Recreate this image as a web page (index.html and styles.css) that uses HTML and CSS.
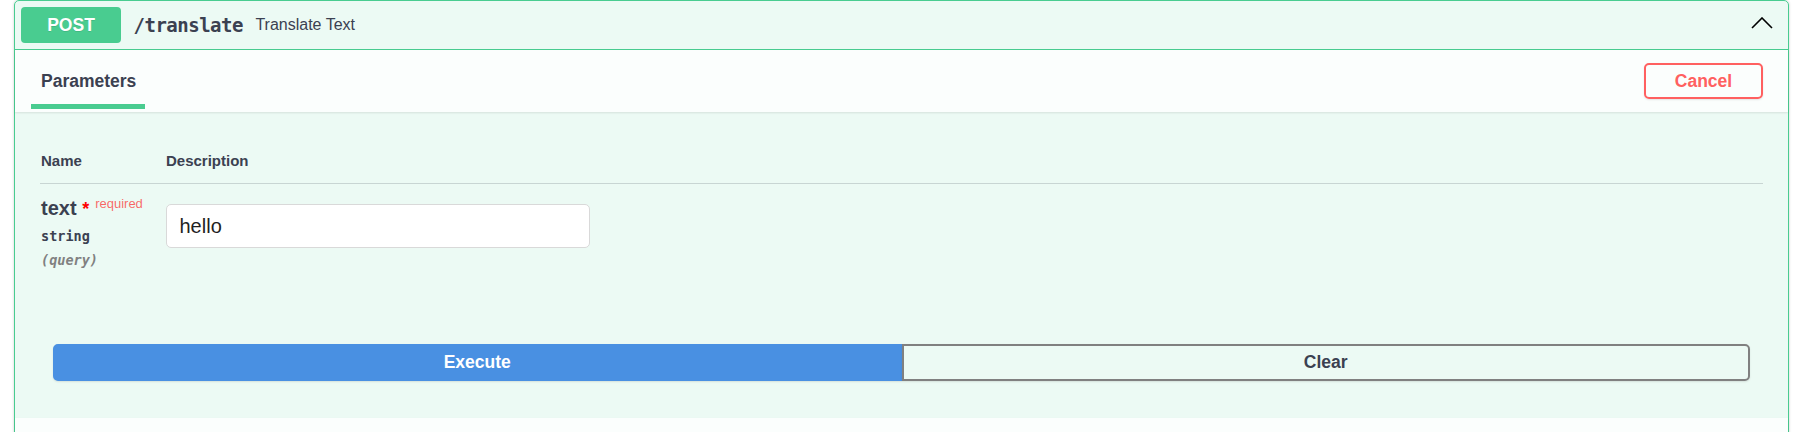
FILE: index.html
```html
<!DOCTYPE html>
<html lang="en">
<head>
<meta charset="utf-8">
<title>POST /translate</title>
<link rel="stylesheet" href="styles.css">
</head>
<body>
<div class="opblock">
  <div class="summary">
    <span class="method">POST</span>
    <span class="path">/translate</span>
    <span class="desc">Translate Text</span>
    <svg class="arrow" width="22" height="12" viewBox="0 0 22 12" aria-hidden="true"><polyline points="1,11 11,1 21,11" fill="none" stroke="#000" stroke-width="1.6"/></svg>
  </div>
  <div class="section-header">
    <div class="tab">
      <h4 class="tab-title">Parameters</h4>
      <span class="tab-bar"></span>
    </div>
    <button class="btn cancel">Cancel</button>
  </div>
  <div class="params">
    <div class="params-head">
      <div class="col-name">Name</div>
      <div class="col-desc">Description</div>
    </div>
    <div class="param-row">
      <div class="col-name">
        <div class="pname">text <span class="star">*</span><span class="req">required</span></div>
        <div class="ptype">string</div>
        <div class="pin">(query)</div>
      </div>
      <div class="col-desc">
        <input class="pinput" type="text" value="hello">
      </div>
    </div>
  </div>
  <div class="btn-group">
    <button class="btn execute">Execute</button>
    <button class="btn clear">Clear</button>
  </div>
  <div class="responses-header"></div>
</div>
</body>
</html>
```
FILE: styles.css
```css
html, body {
  margin: 0;
  padding: 0;
  overflow: hidden;
  background: #fff;
}
body {
  font-family: "Liberation Sans", Arial, sans-serif;
  color: #3b4151;
}
.opblock {
  margin: 0 7px 0 14px;
  border: 1px solid #49cc90;
  border-radius: 5px;
  background: rgba(73, 204, 144, 0.1);
  box-shadow: 0 0 3px rgba(0, 0, 0, 0.19);
}
.summary {
  display: flex;
  align-items: center;
  padding: 6px;
  border-bottom: 1px solid #49cc90;
}
.method {
  display: flex;
  align-items: center;
  justify-content: center;
  width: 100px;
  height: 36px;
  background: #49cc90;
  color: #fff;
  border-radius: 4px;
  font-weight: 700;
  font-size: 17.5px;
  text-shadow: 0 1px 0 rgba(0, 0, 0, 0.1);
}
.path {
  padding: 0 12.5px;
  font-family: "DejaVu Sans Mono", "Liberation Mono", monospace;
  font-weight: 700;
  font-size: 19px;
  letter-spacing: -0.5px;
  color: #3b4151;
}
.desc {
  flex: 1;
  font-size: 16px;
  color: #3b4151;
}
.arrow {
  margin: 0 9px 4px 0;
}
.section-header {
  display: flex;
  justify-content: space-between;
  align-items: stretch;
  height: 62px;
  padding: 0 25px;
  background: rgba(255, 255, 255, 0.8);
  box-shadow: 0 1px 2px rgba(0, 0, 0, 0.1);
}
.tab {
  display: flex;
  flex-direction: column;
  padding-top: 21px;
}
.tab-title {
  margin: 0 0 0 1px;
  font-size: 17.5px;
  line-height: 20px;
  font-weight: 700;
  color: #3b4151;
}
.tab-bar {
  display: block;
  height: 5px;
  margin: 13px -9px 0 -9px;
  background: #49cc90;
}
.btn {
  font-family: "Liberation Sans", Arial, sans-serif;
  font-weight: 700;
  font-size: 17.5px;
  background: transparent;
  border: 2px solid gray;
  border-radius: 5px;
  box-shadow: 0 1px 2px rgba(0, 0, 0, 0.1);
  color: #3b4151;
  cursor: pointer;
  padding: 0;
}
.cancel {
  align-self: center;
  width: 119px;
  height: 36px;
  border-color: #ff6060;
  color: #ff6060;
}
.params {
  padding: 25px 25px 37px;
}
.params-head {
  display: grid;
  grid-template-columns: 126px 1fr;
  padding: 15px 0 13px;
  border-bottom: 1px solid rgba(59, 65, 81, 0.2);
  font-size: 15px;
  line-height: 18px;
  font-weight: 700;
}
.params-head .col-name {
  padding-left: 1px;
}
.param-row {
  display: grid;
  grid-template-columns: 126px 1fr;
  padding-top: 13px;
}
.pname {
  height: 23px;
  padding-left: 1px;
  font-size: 20px;
  line-height: 23px;
  font-weight: 700;
  color: #3b4151;
  white-space: nowrap;
}
.star {
  color: red;
  font-size: 18px;
  line-height: 0;
  font-weight: 700;
}
.req {
  padding-left: 6px;
  color: rgba(255, 0, 0, 0.6);
  font-size: 13px;
  line-height: 0;
  font-weight: 400;
  vertical-align: 7px;
}
.ptype {
  padding: 7px 0 6px 1px;
  font-family: "DejaVu Sans Mono", "Liberation Mono", monospace;
  font-size: 13.5px;
  line-height: 18px;
  font-weight: 700;
  color: #3b4151;
}
.pin {
  padding-left: 1px;
  font-family: "DejaVu Sans Mono", "Liberation Mono", monospace;
  font-size: 13.5px;
  line-height: 18px;
  font-weight: 700;
  font-style: italic;
  color: gray;
}
.pinput {
  box-sizing: border-box;
  display: block;
  width: 424px;
  height: 44px;
  margin: 7px 0 0;
  padding: 0 12.5px;
  border: 1px solid #d9d9d9;
  border-radius: 5px;
  background: #fff;
  font-family: "Liberation Sans", Arial, sans-serif;
  font-size: 20px;
  color: #1f1f1f;
  outline: none;
}
.btn-group {
  display: flex;
  padding: 38px 38px 37px;
}
.btn-group .btn {
  flex: 1;
  height: 37px;
}
.execute {
  background: #4990e2;
  border-color: #4990e2;
  color: #fff;
  border-radius: 5px 0 0 5px;
}
.clear {
  border-radius: 0 5px 5px 0;
}
.responses-header {
  height: 40px;
  background: rgba(255, 255, 255, 0.8);
  box-shadow: 0 1px 2px rgba(0, 0, 0, 0.1);
}
```
